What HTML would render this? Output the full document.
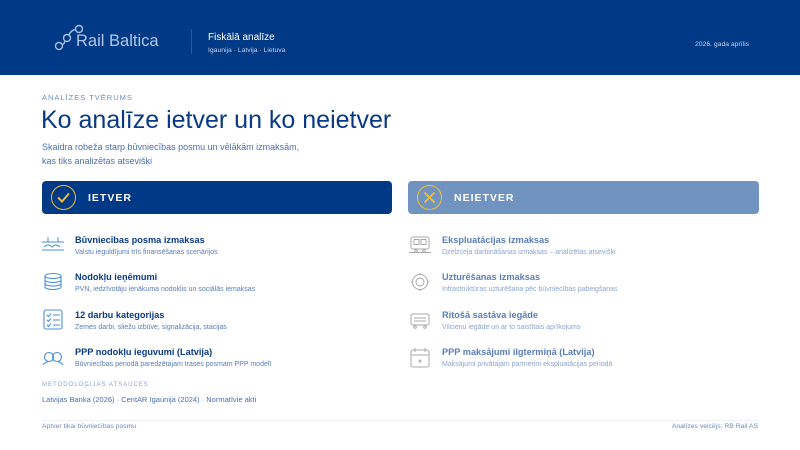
<!DOCTYPE html><html><head><meta charset="utf-8"><style>
*{margin:0;padding:0;box-sizing:border-box}
body{width:800px;height:450px;background:#fff;font-family:"Liberation Sans",sans-serif;position:relative;overflow:hidden}
.hdr{position:absolute;left:0;top:0;width:800px;height:75px;background:#003986}
.a{position:absolute;white-space:nowrap}
.bar{position:absolute;top:181px;height:33px;border-radius:4px}
.circ{position:absolute;left:9px;top:4px;width:25px;height:25px;border-radius:50%;border:1.2px solid #f2c02a}
.bt{position:absolute;left:46px;top:11px;color:#fff;font-weight:bold;font-size:10.5px;letter-spacing:1px}
.it{position:absolute;font-weight:bold;font-size:9.2px}
.is{position:absolute;font-size:7px}
</style></head><body>
<div class="hdr">
<svg class="a" style="left:53px;top:23px" width="30" height="30" viewBox="0 0 30 30" fill="none" stroke="#a9bfe0" stroke-width="1.4"><circle cx="6" cy="23" r="3.5"/><circle cx="14" cy="15" r="3.5"/><circle cx="26" cy="6" r="3.5"/><path d="M9 22 Q12 20 12 18 M16 12 Q18 7 22.5 6.5"/></svg>
<div class="a" style="left:76px;top:32px;font-size:16.5px;color:#b4c6e6">Rail Baltica</div>
<div class="a" style="left:191px;top:29px;width:1px;height:25px;background:#2a55a0"></div>
<div class="a" style="left:208px;top:32px;font-size:10px;color:#fff">Fiskālā analīze</div>
<div class="a" style="left:208px;top:47px;font-size:6.8px;color:#c3d2ec">Igaunija · Latvija · Lietuva</div>
<div class="a" style="left:695px;top:41px;font-size:6.8px;color:#c3d2ec">2026. gada aprīlis</div>
</div>
<div class="a" style="left:42px;top:93px;font-size:7.5px;letter-spacing:1px;color:#6e8bbd">ANALĪZES TVĒRUMS</div>
<div class="a" style="left:41px;top:106px;font-size:25px;color:#0a3a86">Ko analīze ietver un ko neietver</div>
<div class="a" style="left:42px;top:141px;font-size:9px;line-height:13.5px;color:#4a6fae">Skaidra robeža starp būvniecības posmu un vēlākām izmaksām,<br>kas tiks analizētas atsevišķi</div>
<div class="bar" style="left:42px;width:350px;background:#003986"><div class="circ"><svg width="23" height="23" viewBox="0 0 23 23"><path d="M6 11.5l4 4 7-8" stroke="#f2c02a" stroke-width="2" fill="none"/></svg></div><div class="bt">IETVER</div></div>
<div class="bar" style="left:408px;width:351px;background:#7093bf"><div class="circ"><svg width="23" height="23" viewBox="0 0 23 23"><path d="M6.5 6.5l10 10M16.5 6.5l-10 10" stroke="#f2c02a" stroke-width="1.8" fill="none"/></svg></div><div class="bt">NEIETVER</div></div>

<svg class="a" style="left:42px;top:236px" width="22" height="16" viewBox="0 0 22 16" fill="none" stroke="#4a90d9" stroke-width="1"><path d="M0 6h22M6 1v5M16 1v5M2 11q4-4 8 0q4-4 8 0M0 14h22" /></svg>
<svg class="a" style="left:43px;top:272px" width="20" height="20" viewBox="0 0 20 20" fill="none" stroke="#4a90d9" stroke-width="1.1"><ellipse cx="10" cy="4" rx="8" ry="2.5"/><path d="M2 4v11c0 1.4 3.6 2.5 8 2.5s8-1.1 8-2.5V4M2 8c0 1.4 3.6 2.5 8 2.5s8-1.1 8-2.5M2 11.5c0 1.4 3.6 2.5 8 2.5s8-1.1 8-2.5"/></svg>
<svg class="a" style="left:43px;top:309px" width="20" height="21" viewBox="0 0 20 21" fill="none" stroke="#4a90d9" stroke-width="1.1"><rect x="1" y="1" width="18" height="19" rx="2"/><path d="M4 6l1.5 1.5 2.5-3M4 11l1.5 1.5 2.5-3M4 16l1.5 1.5 2.5-3M10 6h7M10 11h7M10 16h7"/></svg>
<svg class="a" style="left:42px;top:350px" width="22" height="16" viewBox="0 0 22 16" fill="none" stroke="#4a90d9" stroke-width="1.1"><circle cx="7" cy="7" r="4.5"/><circle cx="15" cy="7" r="4.5"/><path d="M1 15q2-3 5-3M21 15q-2-3-5-3"/></svg>
<div class="it" style="left:75px;top:235px;color:#0a3a86">Būvniecības posma izmaksas</div>
<div class="is" style="left:75px;top:249px;color:#5a7db8">Valstu ieguldījumi trīs finansēšanas scenārijos</div>
<div class="it" style="left:75px;top:272px;color:#0a3a86">Nodokļu ieņēmumi</div>
<div class="is" style="left:75px;top:286px;color:#5a7db8">PVN, iedzīvotāju ienākuma nodoklis un sociālās iemaksas</div>
<div class="it" style="left:75px;top:310px;color:#0a3a86">12 darbu kategorijas</div>
<div class="is" style="left:75px;top:324px;color:#5a7db8">Zemes darbi, sliežu izbūve, signalizācija, stacijas</div>
<div class="it" style="left:75px;top:347px;color:#0a3a86">PPP nodokļu ieguvumi (Latvija)</div>
<div class="is" style="left:75px;top:361px;color:#5a7db8">Būvniecības periodā paredzētajam trases posmam PPP modelī</div>
<div class="a" style="left:42px;top:382px;font-size:6px;letter-spacing:1px;color:#8aa4cf">METODOLOĢIJAS ATSAUCES</div>
<div class="a" style="left:42px;top:395px;font-size:7.5px;color:#4a6fae">Latvijas Banka (2026) · CentAR Igaunija (2024) · Normatīvie akti</div>

<svg class="a" style="left:409px;top:236px" width="22" height="18" viewBox="0 0 22 18" fill="none" stroke="#a8a8a8" stroke-width="1"><rect x="2" y="1" width="18" height="12" rx="2"/><rect x="5" y="3.5" width="5" height="5"/><rect x="12" y="3.5" width="5" height="5"/><circle cx="7" cy="15" r="1.3"/><circle cx="15" cy="15" r="1.3"/><path d="M0 16.5h22"/></svg>
<svg class="a" style="left:410px;top:272px" width="20" height="20" viewBox="0 0 20 20" fill="none" stroke="#a8a8a8" stroke-width="1"><circle cx="10" cy="10" r="7.5"/><circle cx="10" cy="10" r="4"/><path d="M10 1v2M10 17v2M1 10h2M17 10h2"/></svg>
<svg class="a" style="left:409px;top:312px" width="22" height="18" viewBox="0 0 22 18" fill="none" stroke="#a8a8a8" stroke-width="1"><rect x="2" y="2" width="18" height="11" rx="2"/><path d="M5 6h12M5 9h12"/><circle cx="6" cy="15" r="1.3"/><circle cx="16" cy="15" r="1.3"/></svg>
<svg class="a" style="left:410px;top:347px" width="20" height="21" viewBox="0 0 20 21" fill="none" stroke="#a8a8a8" stroke-width="1"><rect x="1" y="3" width="18" height="17" rx="2"/><path d="M1 8h18M5 1v4M15 1v4"/><circle cx="10" cy="14" r="1"/></svg>
<div class="it" style="left:442px;top:235px;color:#5a7db8">Ekspluatācijas izmaksas</div>
<div class="is" style="left:442px;top:249px;color:#8aa4cf">Dzelzceļa darbināšanas izmaksas – analizētas atsevišķi</div>
<div class="it" style="left:442px;top:272px;color:#5a7db8">Uzturēšanas izmaksas</div>
<div class="is" style="left:442px;top:286px;color:#8aa4cf">Infrastruktūras uzturēšana pēc būvniecības pabeigšanas</div>
<div class="it" style="left:442px;top:310px;color:#5a7db8">Ritošā sastāva iegāde</div>
<div class="is" style="left:442px;top:324px;color:#8aa4cf">Vilcienu iegāde un ar to saistītais aprīkojums</div>
<div class="it" style="left:442px;top:347px;color:#5a7db8">PPP maksājumi ilgtermiņā (Latvija)</div>
<div class="is" style="left:442px;top:361px;color:#8aa4cf">Maksājumi privātajam partnerim ekspluatācijas periodā</div>

<div class="a" style="left:42px;top:420px;width:717px;height:1px;background:#eef1f6"></div>
<div class="a" style="left:42px;top:423px;font-size:6.8px;color:#6e8bbd">Aptver tikai būvniecības posmu</div>
<div class="a" style="right:42px;top:423px;font-size:6.8px;color:#6e8bbd">Analīzes veicējs: RB Rail AS</div>
</body></html>
